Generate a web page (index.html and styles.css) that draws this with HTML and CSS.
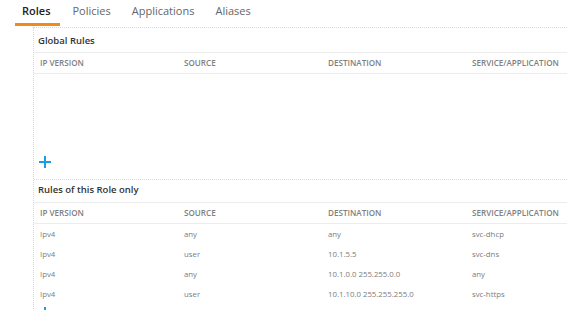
FILE: index.html
```html
<!DOCTYPE html>
<html>
<head>
<meta charset="utf-8">
<link rel="stylesheet" href="styles.css">
</head>
<body>
<div class="tabs">
  <div class="tab active">Roles</div>
  <div class="tab">Policies</div>
  <div class="tab">Applications</div>
  <div class="tab">Aliases</div>
</div>
<div class="panel">
  <div class="section-title">Global Rules</div>
  <div class="row head">
    <div class="cell">IP VERSION</div>
    <div class="cell">SOURCE</div>
    <div class="cell">DESTINATION</div>
    <div class="cell">SERVICE/APPLICATION</div>
  </div>
  <div class="empty"></div>
  <div class="add"><span class="plus"></span></div>
  <div class="section-title second">Rules of this Role only</div>
  <div class="row head">
    <div class="cell">IP VERSION</div>
    <div class="cell">SOURCE</div>
    <div class="cell">DESTINATION</div>
    <div class="cell">SERVICE/APPLICATION</div>
  </div>
  <div class="row data">
    <div class="cell">Ipv4</div><div class="cell">any</div><div class="cell">any</div><div class="cell">svc-dhcp</div>
  </div>
  <div class="row data">
    <div class="cell">Ipv4</div><div class="cell">user</div><div class="cell">10.1.5.5</div><div class="cell">svc-dns</div>
  </div>
  <div class="row data">
    <div class="cell">Ipv4</div><div class="cell">any</div><div class="cell">10.1.0.0 255.255.0.0</div><div class="cell">any</div>
  </div>
  <div class="row data">
    <div class="cell">Ipv4</div><div class="cell">user</div><div class="cell">10.1.10.0 255.255.255.0</div><div class="cell">svc-https</div>
  </div>
  <div class="add last"><span class="plus"></span></div>
</div>
</body>
</html>
```
FILE: styles.css
```css
html, body {
  margin: 0;
  padding: 0;
  background: #fff;
  overflow: hidden;
}
body {
  font-family: "Open Sans", "Liberation Sans", sans-serif;
  color: #333;
  width: 567px;
  height: 310px;
}
.tabs {
  display: flex;
  padding-left: 15px;
  gap: 5px;
  height: 26px;
  box-sizing: border-box;
}
.tab {
  font-size: 11px;
  color: #666;
  padding: 3px 8px 0;
  height: 26px;
  box-sizing: border-box;
  line-height: 16px;
}
.tab.active {
  font-weight: 600;
  color: #222;
  border-bottom: 3px solid #f08a1c;
  padding-left: 7px;
  padding-right: 9px;
}
.panel {
  margin-left: 33px;
  margin-top: 1px;
  border-top: 1px dotted #d6d6d6;
  border-left: 1px dotted #d6d6d6;
  height: 283px;
  overflow: hidden;
}
.section-title {
  font-size: 9.5px;
  font-weight: 600;
  color: #333;
  padding: 0 4px;
  height: 24px;
  line-height: 26px;
  border-bottom: 1px solid #ececec;
}
.section-title.second {
  height: 22px;
  line-height: 20px;
}
.row {
  display: grid;
  grid-template-columns: 144px 144px 144px 1fr;
  padding-left: 6px;
}
.row.head {
  height: 20px;
  line-height: 20px;
  font-size: 8.1px;
  color: #808080;
  font-weight: 600;
  border-bottom: 1px solid #ececec;
}
.row.data {
  height: 20px;
  line-height: 20px;
  font-size: 7.8px;
  color: #7c7c7c;
}
.cell {
  white-space: nowrap;
  overflow: hidden;
}
.empty {
  height: 76px;
}
.add {
  height: 29px;
  border-bottom: 1px dotted #dcdcdc;
  position: relative;
}
.add.last {
  border-bottom: none;
}
.plus {
  position: absolute;
  left: 5px;
  top: 6px;
  width: 12px;
  height: 12px;
}
.add.last .plus {
  top: 3px;
}
.plus::before, .plus::after {
  content: "";
  position: absolute;
  background: #1a9ee0;
}
.plus::before {
  left: 0;
  top: 5px;
  width: 12px;
  height: 2px;
}
.plus::after {
  left: 5px;
  top: 0;
  width: 2px;
  height: 12px;
}
```
